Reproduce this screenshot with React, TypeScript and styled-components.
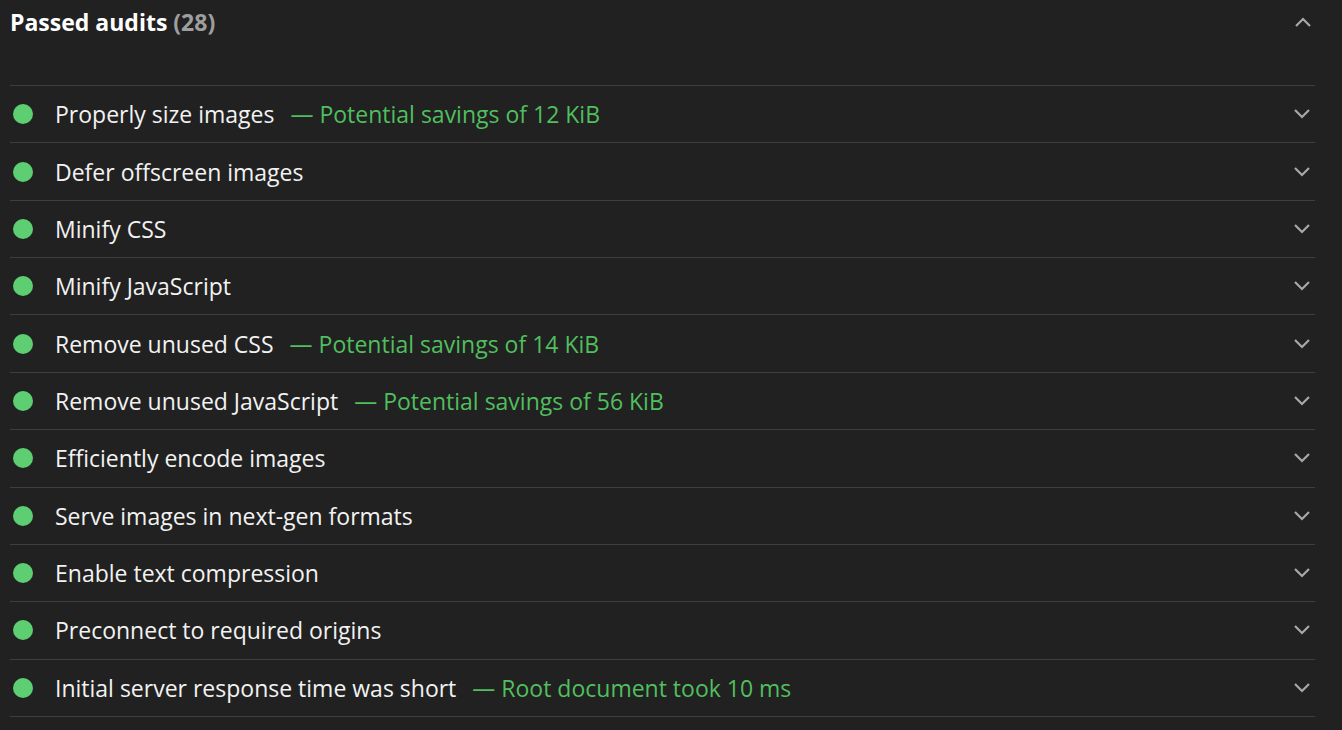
import React from 'react'
import styled, { createGlobalStyle } from 'styled-components'

type auditType = {
  title: string
  value?: string
}

const audits: auditType[] = [
  { title: 'Properly size images', value: 'Potential savings of 12 KiB' },
  { title: 'Defer offscreen images' },
  { title: 'Minify CSS' },
  { title: 'Minify JavaScript' },
  { title: 'Remove unused CSS', value: 'Potential savings of 14 KiB' },
  { title: 'Remove unused JavaScript', value: 'Potential savings of 56 KiB' },
  { title: 'Efficiently encode images' },
  { title: 'Serve images in next-gen formats' },
  { title: 'Enable text compression' },
  { title: 'Preconnect to required origins' },
  { title: 'Initial server response time was short', value: 'Root document took 10 ms' },
]

const GlobalStyle = createGlobalStyle`
  html, body {
    margin: 0;
    padding: 0;
    background: #212121;
  }
  body {
    font-family: 'Open Sans', 'Noto Sans', sans-serif;
    color: #f0f0f0;
  }
`

const Chevron = ({ up }: { up?: boolean }) => (
  <svg width="18" height="10" viewBox="0 0 18 10">
    <path
      d={up ? 'M2 9 L9 2 L16 9' : 'M2 1 L9 8 L16 1'}
      fill="none"
      stroke="#a8a8a8"
      strokeWidth="2.2"
    />
  </svg>
)

export default function App() {
  return (
    <>
      <GlobalStyle />
      <SContainer>
        <SHeader>
          <STitle>
            Passed audits <SCount>(28)</SCount>
          </STitle>
          <Chevron up />
        </SHeader>
        <SList>
          {audits.map((audit) => (
            <SRow key={audit.title}>
              <SDot />
              <SText>{audit.title}</SText>
              {audit.value && <SValue>— {audit.value}</SValue>}
              <SToggle>
                <Chevron />
              </SToggle>
            </SRow>
          ))}
        </SList>
      </SContainer>
    </>
  )
}

const SContainer = styled.div`
  padding: 0 27px 0 10px;
`

const SHeader = styled.div`
  display: flex;
  align-items: center;
  justify-content: space-between;
  height: 44px;
  padding-right: 3px;
  margin-bottom: 41px;
`

const STitle = styled.div`
  font-size: 23px;
  font-weight: 700;
  color: #ffffff;
`

const SCount = styled.span`
  color: #9e9e9e;
`

const SList = styled.div`
  border-top: 1px solid #3e3e3e;
`

const SRow = styled.div`
  display: flex;
  align-items: center;
  box-sizing: border-box;
  height: 57.36px;
  padding: 0 4px 0 3px;
  border-bottom: 1px solid #3e3e3e;
  font-size: 23px;
`

const SDot = styled.span`
  width: 20px;
  height: 20px;
  border-radius: 50%;
  background: #5dce72;
  margin-right: 22px;
  flex-shrink: 0;
`

const SText = styled.span`
  color: #f2f2f2;
`

const SValue = styled.span`
  color: #50bf5e;
  margin-left: 16px;
`

const SToggle = styled.span`
  margin-left: auto;
  display: flex;
`
